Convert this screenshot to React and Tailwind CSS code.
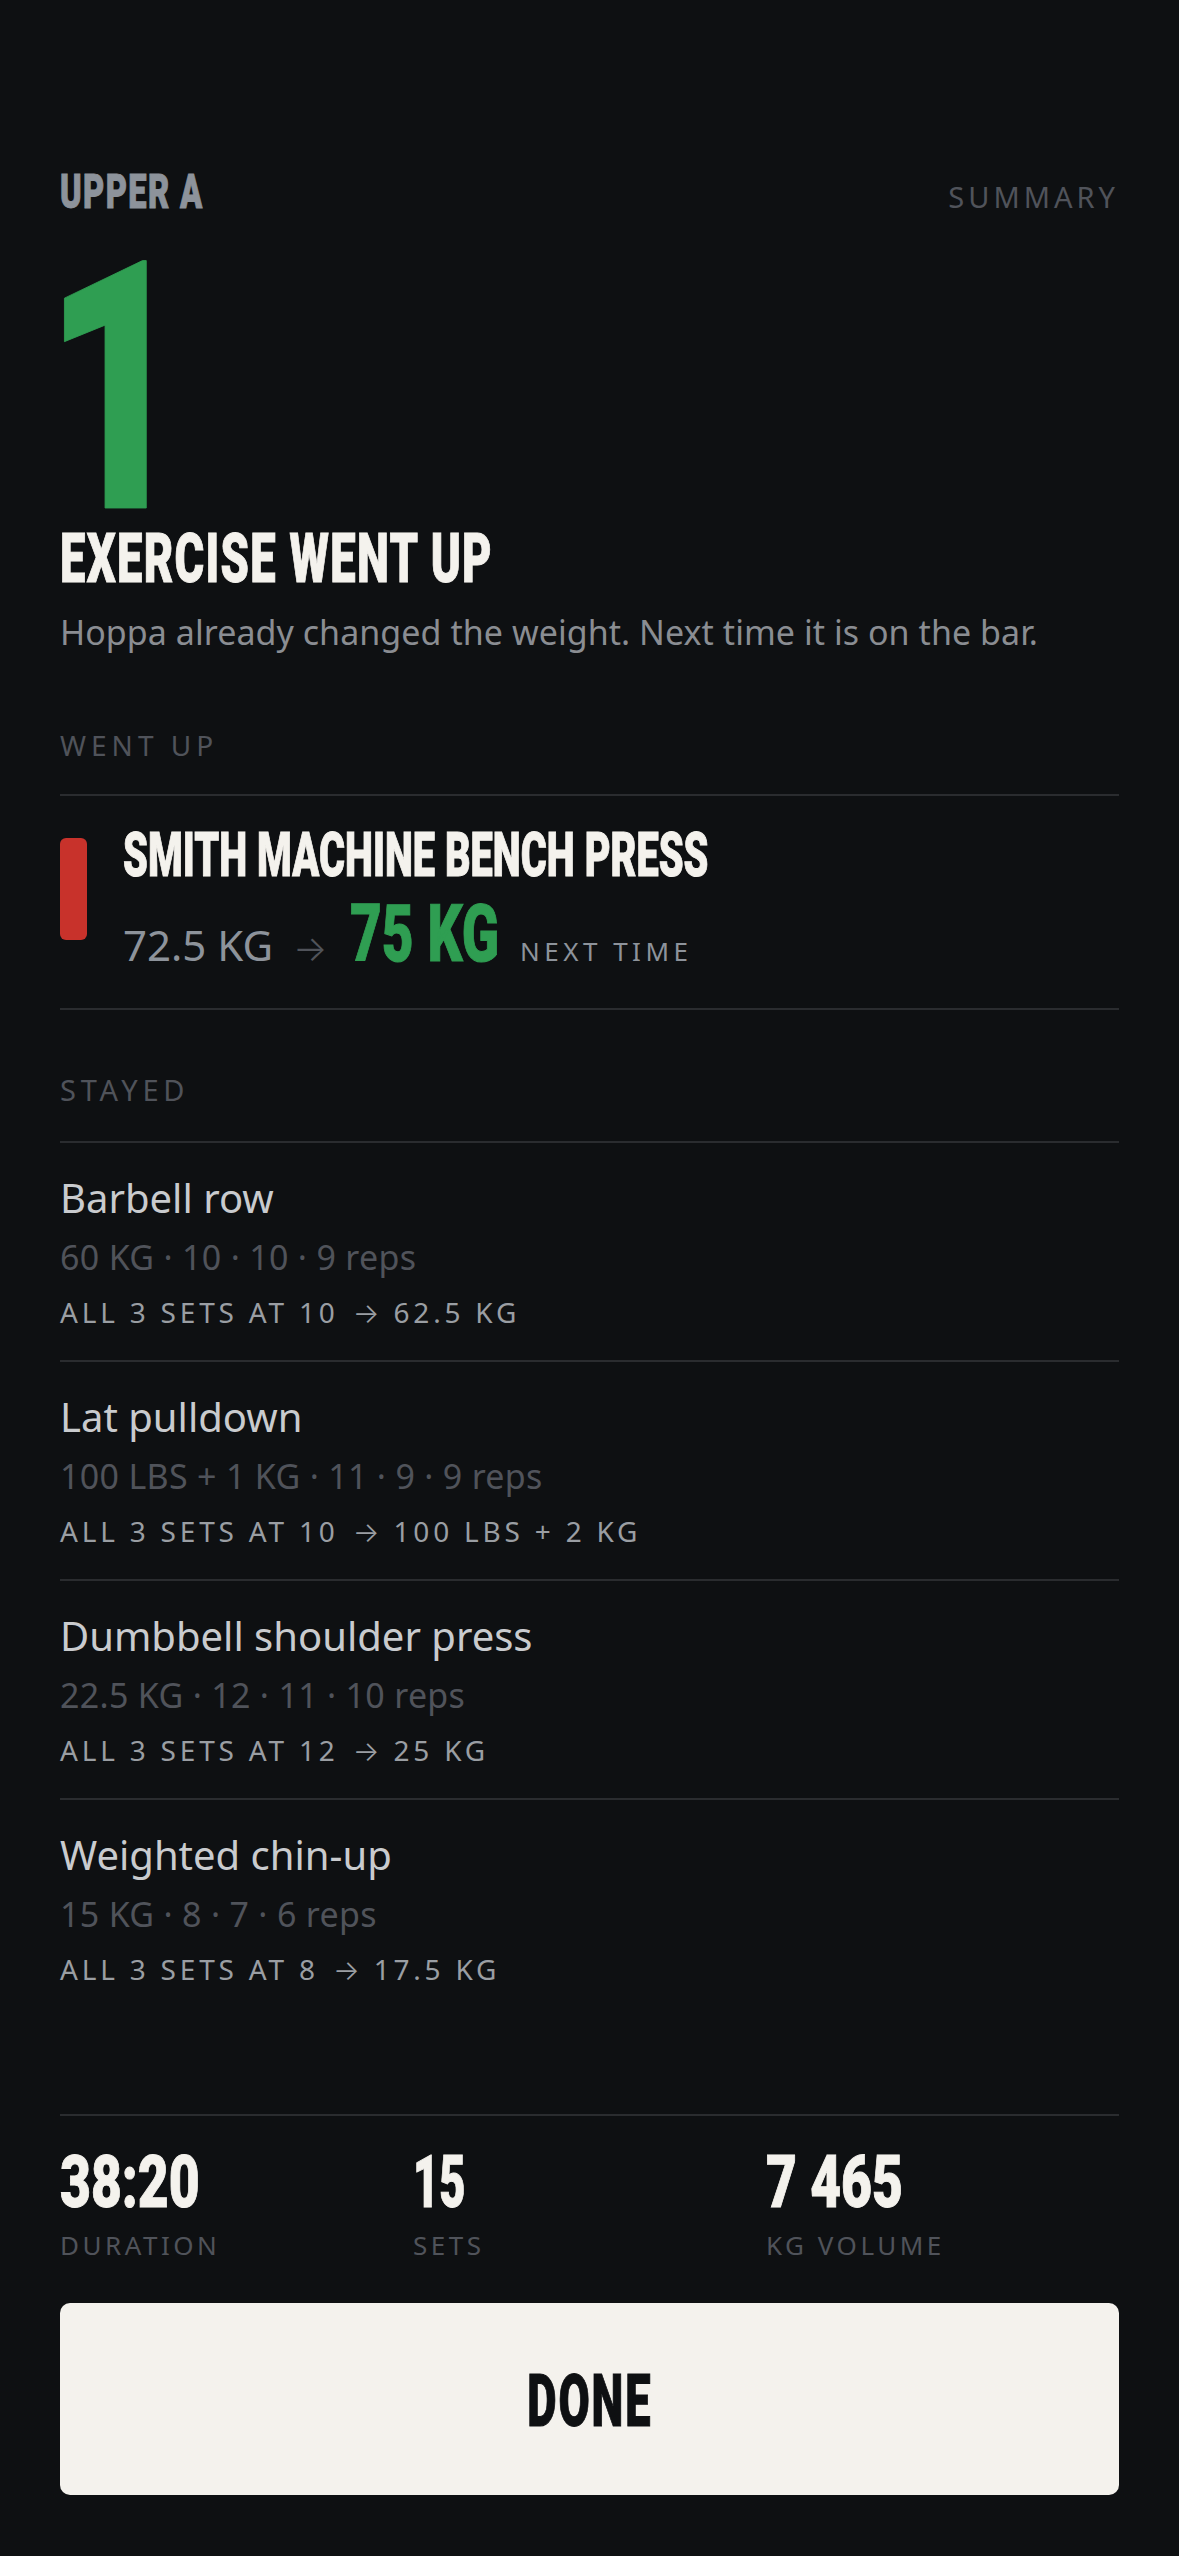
import React from 'react';

const STAYED = [
    { name: 'Barbell row', detail: '60 KG · 10 · 10 · 9 reps', from: 'ALL 3 SETS AT 10', to: '62.5 KG' },
    { name: 'Lat pulldown', detail: '100 LBS + 1 KG · 11 · 9 · 9 reps', from: 'ALL 3 SETS AT 10', to: '100 LBS + 2 KG' },
    { name: 'Dumbbell shoulder press', detail: '22.5 KG · 12 · 11 · 10 reps', from: 'ALL 3 SETS AT 12', to: '25 KG' },
    { name: 'Weighted chin-up', detail: '15 KG · 8 · 7 · 6 reps', from: 'ALL 3 SETS AT 8', to: '17.5 KG' },
];

const STATS = [
    { value: '38:20', label: 'DURATION', scale: 'scale-x-[0.73]' },
    { value: '15', label: 'SETS', scale: 'scale-x-[0.62]' },
    { value: '7 465', label: 'KG VOLUME', scale: 'scale-x-[0.73]' },
];

const display = "font-['Roboto',sans-serif] font-black inline-block whitespace-nowrap [-webkit-text-stroke:1px_currentColor]";
const body = "font-['Noto_Sans',sans-serif]";
const arrow = "font-['Inter',sans-serif] font-light";

export default function App() {
    return (
        <div className={`w-[1179px] h-[2556px] overflow-hidden bg-[#0e1012] px-[60px] pt-[162px] flex flex-col ${body}`}>
            {/* Header */}
            <div className="flex justify-between items-baseline h-[60px]">
                <span className={`${display} origin-left text-[48px] leading-[60px] tracking-[2px] scale-x-[0.68] text-[#8d939b]`}>UPPER A</span>
                <span className="text-[29px] leading-[40px] tracking-[4px] text-[#50535a]">SUMMARY</span>
            </div>
            <div className="h-[270px] mt-[32px]">
                <span className={`${display} origin-left -ml-[16px] text-[348px] leading-[270px] scale-x-[0.72] text-[#2f9e52]`}>1</span>
            </div>
            <h1 className="leading-[66px] mt-[2px]">
                <span className={`${display} origin-left text-[69px] leading-[66px] tracking-[2px] scale-x-[0.657] text-[#f4f2ed]`}>EXERCISE WENT UP</span>
            </h1>
            <p className="text-[34px] leading-[48px] tracking-[0.05px] text-[#8a8d92] -mt-[1px]">Hoppa already changed the weight. Next time it is on the bar.</p>

            {/* Went up */}
            <div className="text-[28px] leading-[36px] tracking-[5px] text-[#50535a] mt-[71px]">WENT UP</div>
            <div className="border-y-2 border-[#2a2c2f] mt-[31px] h-[216px] flex gap-[37px] pt-[42px]">
                <div className="w-[27px] h-[102px] rounded-[6px] bg-[#c8322b] shrink-0" />
                <div className="-ml-[1px]">
                    <div className="h-[50px] -mt-[8px]">
                        <span className={`${display} origin-left text-[62px] leading-[50px] scale-x-[0.641] text-[#f4f2ed]`}>SMITH MACHINE BENCH PRESS</span>
                    </div>
                    <div className="flex items-baseline mt-[14px]">
                        <span className="text-[42px] leading-[80px] text-[#8d939b]">72.5 KG</span>
                        <span className={`${arrow} text-[36px] w-[29px] text-[#50535a] ml-[20px]`}>→</span>
                        <span className={`${display} origin-left text-[80px] leading-[80px] scale-x-[0.687] w-[147px] text-[#2f9e52] ml-[28px]`}>75 KG</span>
                        <span className="text-[26px] tracking-[4.5px] text-[#8d939b] ml-[23px]">NEXT TIME</span>
                    </div>
                </div>
            </div>

            {/* Stayed */}
            <div className="text-[29px] leading-[36px] tracking-[4.8px] text-[#50535a] mt-[62px]">STAYED</div>
            <div className="mt-[33px] border-t-2 border-[#2a2c2f]">
                {STAYED.map((row, i) => (
                    <div key={row.name} className={`h-[219px] pt-[29px] ${i < STAYED.length - 1 ? 'border-b-2 border-[#2a2c2f]' : ''}`}>
                        <div className="text-[40px] leading-[52px] text-[#c9cbce]">{row.name}</div>
                        <div className="text-[34px] leading-[44px] tracking-[0.3px] text-[#50535a] mt-[11px]">{row.detail}</div>
                        <div className="text-[28px] leading-[36px] tracking-[3.8px] text-[#9a9ea3] mt-[15px]">
                            {row.from} <span className={`${arrow} tracking-normal mx-[3px]`}>→</span> {row.to}
                        </div>
                    </div>
                ))}
            </div>

            {/* Stats */}
            <div className="grid grid-cols-3 border-t-2 border-[#2a2c2f] mt-[95px] pt-[30px]">
                {STATS.map(stat => (
                    <div key={stat.label}>
                        <div className="h-[72px]">
                            <span className={`${display} origin-left text-[73px] leading-[72px] ${stat.scale} text-[#f4f2ed]`}>{stat.value}</span>
                        </div>
                        <div className="text-[26px] leading-[34px] tracking-[3.5px] text-[#50535a] mt-[10px]">{stat.label}</div>
                    </div>
                ))}
            </div>

            <button className="w-full h-[192px] mt-[41px] pt-[5px] rounded-[10px] bg-[#f4f2ed] flex items-center justify-center">
                <span className={`${display} text-[73px] tracking-[3px] scale-x-[0.62] text-[#0e1012]`}>DONE</span>
            </button>
        </div>
    );
}
